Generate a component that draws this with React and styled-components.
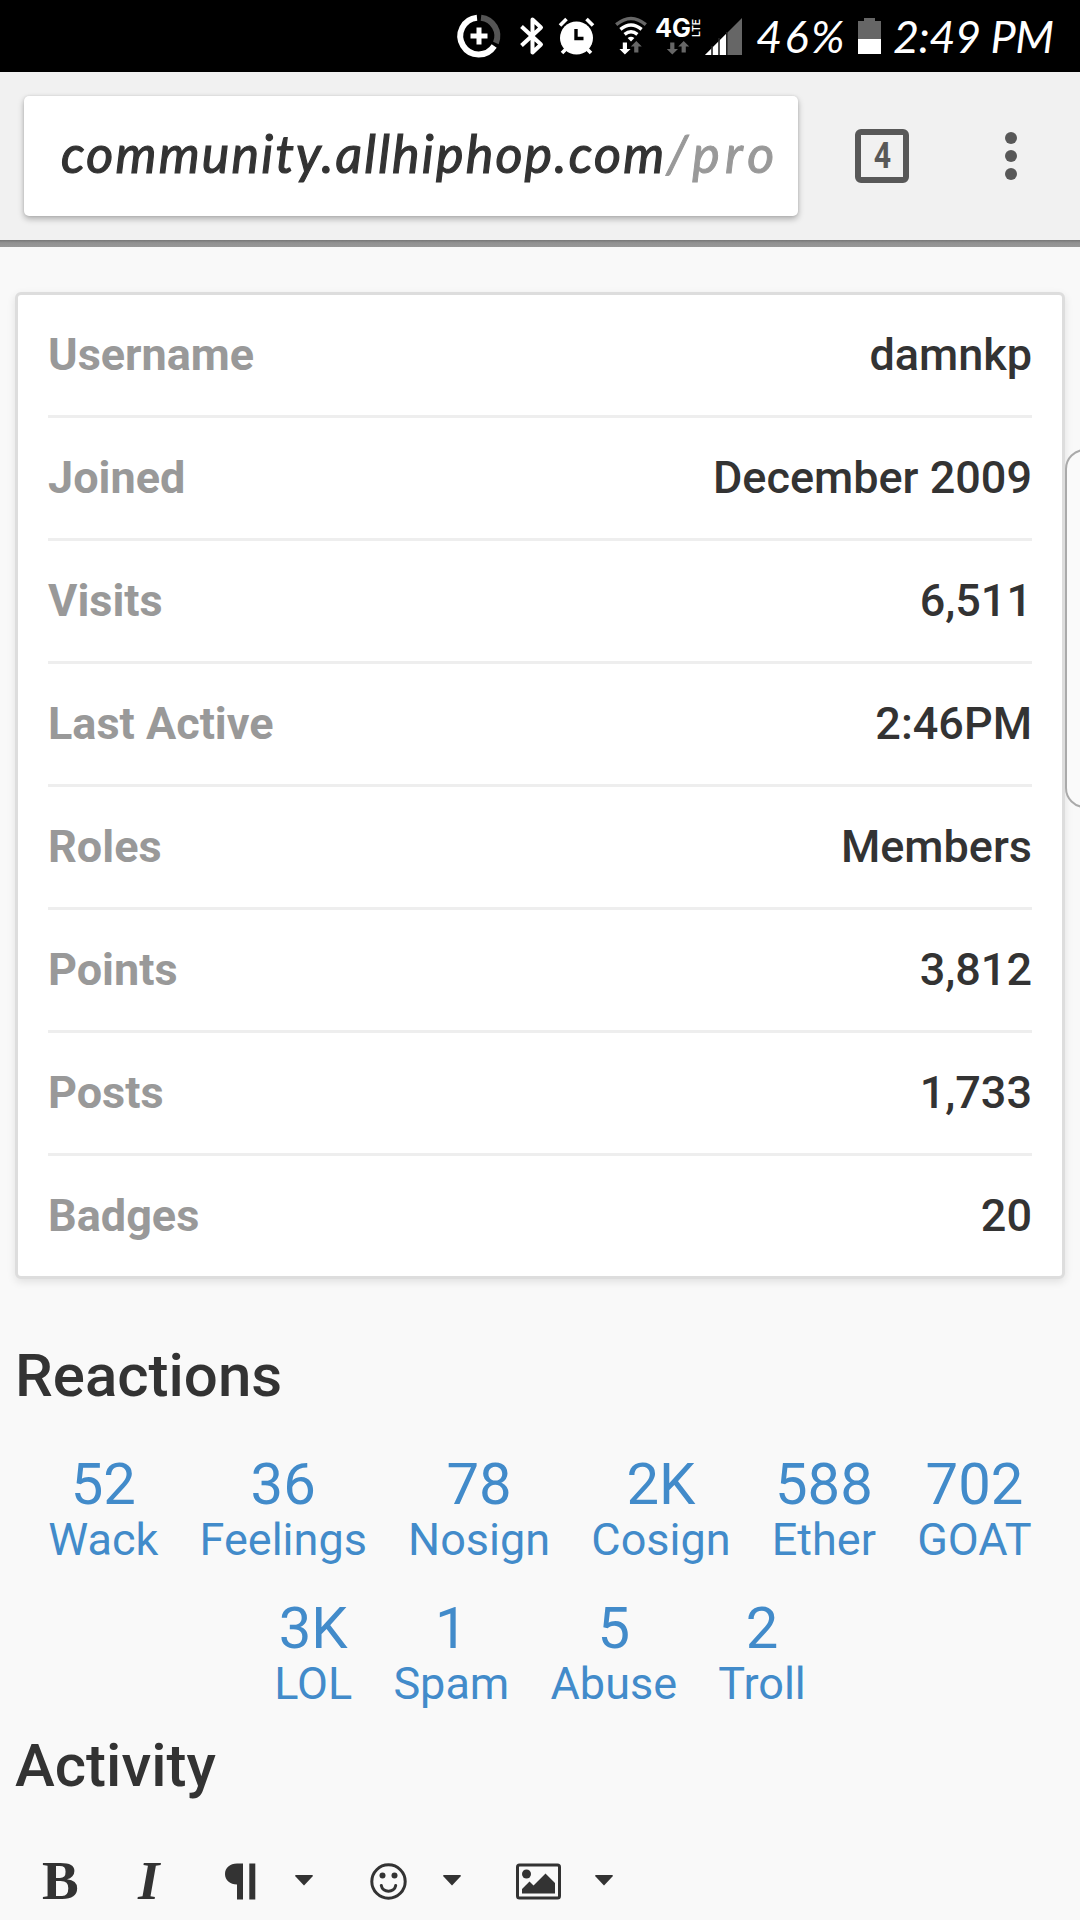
import React from "react";
import styled, { createGlobalStyle } from "styled-components";

const PROFILE = [
  { label: "Username", value: "damnkp" },
  { label: "Joined", value: "December 2009" },
  { label: "Visits", value: "6,511" },
  { label: "Last Active", value: "2:46PM" },
  { label: "Roles", value: "Members" },
  { label: "Points", value: "3,812" },
  { label: "Posts", value: "1,733" },
  { label: "Badges", value: "20" },
];

const REACTIONS = [
  { count: "52", name: "Wack" },
  { count: "36", name: "Feelings" },
  { count: "78", name: "Nosign" },
  { count: "2K", name: "Cosign" },
  { count: "588", name: "Ether" },
  { count: "702", name: "GOAT" },
  { count: "3K", name: "LOL" },
  { count: "1", name: "Spam" },
  { count: "5", name: "Abuse" },
  { count: "2", name: "Troll" },
];

const DataIcon = () => (
  <StatusIcon width="44" height="44" viewBox="0 0 44 44" $gap={0}>
    <path d="M20 3.7A18.4 18.4 0 1 0 37.2 32" stroke="#fff" strokeWidth="6" />
    <path d="M24 3.7A18.4 18.4 0 0 1 38.9 29" stroke="#555" strokeWidth="6" />
    <path d="M22 13.5v17M13.5 22h17" stroke="#fff" strokeWidth="5" />
  </StatusIcon>
);

const BluetoothIcon = () => (
  <StatusIcon width="24" height="38" viewBox="0 0 24 38" $gap={19}>
    <path
      d="M1.5 9.5L21 27.5L12.5 35.5V2.5L21 10.5L1.5 28.5"
      stroke="#fff"
      strokeWidth="4"
      strokeLinejoin="round"
    />
  </StatusIcon>
);

const AlarmIcon = () => (
  <StatusIcon width="35" height="37" viewBox="0 0 35 37" $gap={15}>
    <circle cx="17.5" cy="20" r="16.5" fill="#fff" />
    <path
      d="M1 7.5L7.5 1M34 7.5L27.5 1M3 35l5-5M32 35l-5-5"
      stroke="#fff"
      strokeWidth="3.6"
    />
    <path d="M17 11v9.5h7.5" stroke="#000" strokeWidth="3.4" />
  </StatusIcon>
);

const TransferArrows = ({ x, down }) => (
  <g transform={`translate(${x} 24)`}>
    <path d="M3.2 1.5h4.2V8H11L5.3 13.5L-.2 8h3.4z" fill={down} />
    <path d="M14.6 11.5h4.2V5.5h3.4L16.7 0L11.2 5.5h3.4z" fill="#666" />
  </g>
);

const WifiIcon = () => (
  <StatusIcon width="32" height="38" viewBox="0 0 32 38" $gap={21}>
    <path d="M1.2 7.6Q16 -4.8 30.8 7.6" stroke="#666" strokeWidth="3.4" />
    <path d="M5.4 12.4Q16 3.8 26.6 12.4" stroke="#fff" strokeWidth="3.4" />
    <path d="M9.6 17.4Q16 12 22.4 17.4" stroke="#fff" strokeWidth="3.4" />
    <path d="M12.6 21Q16 18.4 19.4 21L16 24.6z" fill="#fff" />
    <TransferArrows x={4.6} down="#fff" />
  </StatusIcon>
);

const NetworkIcon = () => (
  <StatusIcon width="46" height="38" viewBox="0 0 46 38" $gap={8}>
    <text
      x="0"
      y="19.6"
      fill="#fff"
      fontFamily="Inter, sans-serif"
      fontSize="25"
      fontStyle="normal"
      fontWeight="700"
      textLength="36"
      lengthAdjust="spacingAndGlyphs"
    >
      4G
    </text>
    <text
      transform="translate(44.8 20) rotate(-90)"
      fill="#fff"
      fontFamily="Inter, sans-serif"
      fontSize="10.5"
      fontStyle="normal"
      fontWeight="600"
      textLength="18"
      lengthAdjust="spacingAndGlyphs"
    >
      LTE
    </text>
    <TransferArrows x={12} down="#666" />
  </StatusIcon>
);

const SignalIcon = () => (
  <StatusIcon width="37" height="37" viewBox="0 0 37 37" $gap={4}>
    <path d="M37 0V37H0z" fill="#666" />
    <path d="M21.5 15.5V37H0z" fill="#fff" />
    <path d="M7 28v9M14 20v17M21.8 14v23" stroke="#222" strokeWidth="1.6" />
  </StatusIcon>
);

const BatteryIcon = () => (
  <StatusIcon width="23" height="36" viewBox="0 0 23 36" $gap={0}>
    <path d="M6 0h11v3h6v18H0V3h6z" fill="#666" />
    <path d="M0 21h23v15H0z" fill="#fff" />
  </StatusIcon>
);

const ParagraphIcon = () => (
  <svg width="31" height="37" viewBox="0 0 31 37" fill="#333">
    <path d="M18 .5V36.500H12V21.500C5 21.500 0 17 0 11S5 .5 12 .5zM24.300 .5H30.300V36.500H24.300z" />
  </svg>
);

const SmileIcon = () => (
  <svg width="37" height="37" viewBox="0 0 37 37" fill="none" stroke="#333">
    <circle cx="18.500" cy="18.500" r="16.700" strokeWidth="3" />
    <circle cx="12.500" cy="12.500" r="3" fill="#333" stroke="none" />
    <circle cx="24.500" cy="12.500" r="3" fill="#333" stroke="none" />
    <path
      d="M11.300 22.500C12.500 30 24.500 30 25.700 22.500"
      strokeWidth="3"
      strokeLinecap="round"
    />
  </svg>
);

const ImageIcon = () => (
  <svg width="45" height="37" viewBox="0 0 45 37" fill="#333">
    <rect
      x="1.500"
      y="2"
      width="42"
      height="33"
      rx="2"
      fill="none"
      stroke="#333"
      strokeWidth="3"
    />
    <circle cx="10.500" cy="11" r="4.500" />
    <path d="M6 30.500V26L13.500 18.500L17.500 22.500L29.500 10.500L39 20V30.500z" />
  </svg>
);

const Caret = () => (
  <svg width="18" height="13" viewBox="0 0 18 13" fill="#333">
    <path d="M1 0H17Q18.500 .3 17.500 1.500L9 10.500L.5 1.500Q-.5 .3 1 0z" />
  </svg>
);

const App = () => {
  return (
    <Screen>
      <GlobalStyle />
      <StatusBar>
        <DataIcon />
        <BluetoothIcon />
        <AlarmIcon />
        <WifiIcon />
        <NetworkIcon />
        <SignalIcon />
        <Percent>46%</Percent>
        <BatteryIcon />
        <Clock>2:49 PM</Clock>
      </StatusBar>
      <BrowserBar>
        <AddressBox>
          <Host>community.allhiphop.com</Host>
          <Path>/pro</Path>
        </AddressBox>
        <TabCount>
          <span>4</span>
        </TabCount>
        <Menu>
          <Dot />
          <Dot />
          <Dot />
        </Menu>
      </BrowserBar>
      <BarShadow />
      <Content>
        <Card>
          {PROFILE.map((row) => (
            <Row key={row.label}>
              <Label>{row.label}</Label>
              <Value>{row.value}</Value>
            </Row>
          ))}
        </Card>
        <Heading>Reactions</Heading>
        <Reactions>
          {REACTIONS.map((reaction) => (
            <Reaction key={reaction.name}>
              <Count>{reaction.count}</Count>
              <Name>{reaction.name}</Name>
            </Reaction>
          ))}
        </Reactions>
        <Heading>Activity</Heading>
        <Editor>
          <Letter $width={37}>B</Letter>
          <Letter $width={30} $italic>
            I
          </Letter>
          <Tool $gap={57}>
            <ParagraphIcon />
          </Tool>
          <Tool $gap={39}>
            <Caret />
          </Tool>
          <Tool $gap={57}>
            <SmileIcon />
          </Tool>
          <Tool $gap={36}>
            <Caret />
          </Tool>
          <Tool $gap={55}>
            <ImageIcon />
          </Tool>
          <Tool $gap={34}>
            <Caret />
          </Tool>
        </Editor>
      </Content>
      <EdgeHandle />
    </Screen>
  );
};

const GlobalStyle = createGlobalStyle`
  * {
    box-sizing: border-box;
  }
  body {
    margin: 0;
    background: #f9f9f9;
  }
`;

const Screen = styled.div`
  position: relative;
  width: 1080px;
  height: 1920px;
  overflow: hidden;
  background: #f9f9f9;
  color: #333;
  font-family: Roboto, sans-serif;
`;

const StatusBar = styled.div`
  display: flex;
  align-items: center;
  height: 72px;
  padding-left: 457px;
  background: #000;
  color: #fff;
  font-family: Lato, sans-serif;
  font-style: italic;
  font-size: 45px;
  line-height: 72px;
  white-space: nowrap;
`;

const StatusIcon = styled.svg`
  flex: none;
  margin-left: ${(props) => props.$gap}px;
  fill: none;
  overflow: visible;
`;

const Percent = styled.div`
  width: 101px;
  margin-left: 14px;
  margin-right: 1px;
  letter-spacing: 2.5px;
`;

const Clock = styled.div`
  margin-left: 12px;
  letter-spacing: -0.5px;
`;

const BrowserBar = styled.div`
  display: flex;
  align-items: center;
  height: 168px;
  padding-left: 24px;
  background: #f1f1f1;
`;

const AddressBox = styled.div`
  display: flex;
  align-items: center;
  width: 774px;
  height: 120px;
  padding-left: 37px;
  padding-bottom: 6px;
  border-radius: 5px;
  background: #fff;
  box-shadow: 0 3px 6px rgba(0, 0, 0, 0.28), 0 0 3px rgba(0, 0, 0, 0.1);
  font-family: Lato, sans-serif;
  font-style: italic;
  font-size: 52px;
  white-space: nowrap;
`;

const Host = styled.span`
  letter-spacing: 2.2px;
  -webkit-text-stroke: 1.2px #333;
`;

const Path = styled.span`
  color: #999;
  letter-spacing: 5.4px;
  -webkit-text-stroke: 1px #999;
`;

const TabCount = styled.div`
  display: flex;
  align-items: center;
  justify-content: center;
  width: 54px;
  height: 54px;
  margin-left: 57px;
  border: 6px solid #585858;
  border-radius: 6px;
  color: #585858;
  font-size: 36px;
  font-weight: 700;
  line-height: 42px;

  span {
    transform: scaleX(0.84);
  }
`;

const Menu = styled.div`
  display: flex;
  flex-direction: column;
  gap: 6px;
  margin-left: 96px;
`;

const Dot = styled.div`
  width: 12px;
  height: 12px;
  border-radius: 50%;
  background: #585858;
`;

const BarShadow = styled.div`
  height: 7px;
  background: linear-gradient(#777, #929292 40%, #989898);
`;

const Content = styled.div`
  padding: 45px 15px 0;
`;

const Card = styled.div`
  padding: 0 30px;
  border: 3px solid #ddd;
  border-radius: 6px;
  background: #fff;
  box-shadow: 0 3px 9px rgba(0, 0, 0, 0.1);
`;

const Row = styled.div`
  display: flex;
  align-items: center;
  justify-content: space-between;
  height: 123px;
  padding-bottom: 2px;
  border-bottom: 3px solid #eee;
  font-size: 45px;

  &:last-child {
    height: 120px;
    border-bottom: 0;
  }
`;

const Label = styled.div`
  color: #999;
  font-weight: 700;
`;

const Value = styled.div`
  font-weight: 500;
`;

const Heading = styled.h2`
  margin: 0;
  padding-top: 61px;
  font-size: 60px;
  font-weight: 500;
  line-height: 72px;

  & ~ & {
    padding-top: 21px;
  }
`;

const Reactions = styled.div`
  display: flex;
  flex-wrap: wrap;
  justify-content: center;
  gap: 33px 41.2px;
  padding-top: 42px;
`;

const Reaction = styled.div`
  color: #428bca;
  text-align: center;
`;

const Count = styled.div`
  font-size: 58px;
  line-height: 60px;
`;

const Name = styled.div`
  font-size: 45px;
  line-height: 51px;
`;

const Editor = styled.div`
  display: flex;
  align-items: center;
  height: 60px;
  margin-top: 49px;
  padding-left: 27px;
`;

const Letter = styled.span`
  width: ${(props) => props.$width}px;
  margin-left: ${(props) => (props.$italic ? "59px" : "0")};
  font-family: "Liberation Serif", serif;
  font-size: 55px;
  font-style: ${(props) => (props.$italic ? "italic" : "normal")};
  font-weight: 700;
  line-height: 60px;
`;

const Tool = styled.span`
  display: flex;
  margin-left: ${(props) => props.$gap}px;
`;

const EdgeHandle = styled.div`
  position: absolute;
  top: 449px;
  left: 1065px;
  width: 40px;
  height: 359px;
  border: 2px solid #aaa;
  border-radius: 20px;
  background: #fafafa;
`;

export default App;
